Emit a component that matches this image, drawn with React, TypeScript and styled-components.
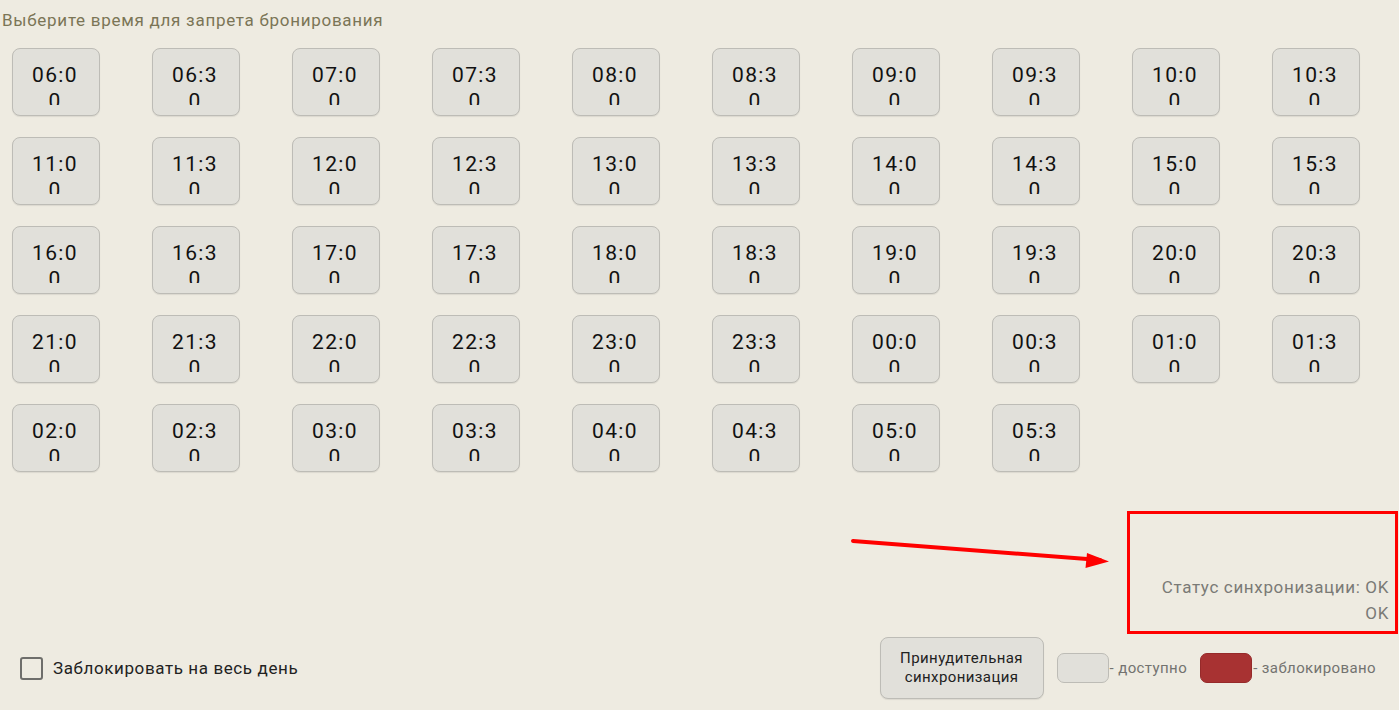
import styled, { createGlobalStyle } from "styled-components";

const GlobalStyle = createGlobalStyle`
  html, body {
    margin: 0;
    padding: 0;
    background: #eeebe1;
    font-family: Roboto, "Noto Sans", sans-serif;
  }
`;

// 06:00 ... 05:30, every half hour
const times: string[] = Array.from({ length: 48 }, (_, i) => {
  const h = (6 + Math.floor(i / 2)) % 24;
  return `${String(h).padStart(2, "0")}:${i % 2 ? "30" : "00"}`;
});

const App = () => {
  return (
    <>
      <GlobalStyle />
      <Page>
        <Title>Выберите время для запрета бронирования</Title>
        <TimeGrid>
          {times.map((t) => (
            <TimeButton key={t}>
              <TimeLabel>{t}</TimeLabel>
            </TimeButton>
          ))}
        </TimeGrid>
        <Spacer />
        <StatusBox>
          <StatusLine>Статус синхронизации: OK</StatusLine>
          <StatusLine>OK</StatusLine>
        </StatusBox>
        <Footer>
          <CheckRow>
            <CheckBox />
            <CheckText>Заблокировать на весь день</CheckText>
          </CheckRow>
          <RightGroup>
            <SyncButton>
              Принудительная
              <br />
              синхронизация
            </SyncButton>
            <Legend>
              <Swatch $blocked={false} />
              <LegendText>- доступно</LegendText>
            </Legend>
            <Legend>
              <Swatch $blocked />
              <LegendText>- заблокировано</LegendText>
            </Legend>
          </RightGroup>
        </Footer>
        <Arrow width="270" height="40" viewBox="0 0 270 40">
          <line x1="3" y1="6" x2="250" y2="25" stroke="#ff0000" strokeWidth="4" strokeLinecap="round" />
          <polygon points="259,26.5 237,18 235.5,33" fill="#ff0000" />
        </Arrow>
      </Page>
    </>
  );
};

const Page = styled.div`
  position: relative;
  width: 1399px;
  height: 710px;
  display: flex;
  flex-direction: column;
  box-sizing: border-box;
  overflow: hidden;
`;

const Title = styled.div`
  margin: 11px 0 0 2px;
  font-size: 17px;
  line-height: 19px;
  letter-spacing: 0.72px;
  color: #7b7556;
`;

const TimeGrid = styled.div`
  display: grid;
  grid-template-columns: repeat(10, 88px);
  column-gap: 52px;
  row-gap: 21px;
  margin: 18px 0 0 12px;
`;

const TimeButton = styled.div`
  box-sizing: border-box;
  width: 88px;
  height: 68px;
  padding: 13px 20px 0 18px;
  border: 1px solid #bdbcb6;
  border-radius: 8px;
  background: #e1e0da;
  box-shadow: 0 1px 1px rgba(0, 0, 0, 0.08);
`;

const TimeLabel = styled.div`
  height: 43px;
  overflow: hidden;
  font-size: 21px;
  line-height: 26px;
  letter-spacing: 1.4px;
  color: #111;
  text-align: center;
  word-break: break-all;
`;

const Spacer = styled.div`
  flex: 1;
`;

const StatusBox = styled.div`
  align-self: flex-end;
  box-sizing: border-box;
  width: 271px;
  height: 123px;
  margin-right: 1px;
  padding: 0 6px 5px 0;
  border: 3px solid #ff0000;
  display: flex;
  flex-direction: column;
  justify-content: flex-end;
  align-items: flex-end;
`;

const StatusLine = styled.div`
  font-size: 17px;
  line-height: 26px;
  letter-spacing: 0.65px;
  color: #7a7a76;
`;

const Footer = styled.div`
  height: 76px;
  box-sizing: border-box;
  padding: 3px 23px 11px 20px;
  display: flex;
  align-items: center;
  justify-content: space-between;
`;

const CheckRow = styled.div`
  display: flex;
  align-items: center;
  gap: 10px;
`;

const CheckBox = styled.div`
  box-sizing: border-box;
  width: 23px;
  height: 23px;
  border: 2px solid #6e6e6b;
  border-radius: 3px;
`;

const CheckText = styled.span`
  font-size: 17px;
  letter-spacing: 0.6px;
  color: #222;
`;

const RightGroup = styled.div`
  display: flex;
  align-items: center;
  gap: 13px;
`;

const SyncButton = styled.div`
  box-sizing: border-box;
  width: 164px;
  height: 62px;
  display: flex;
  align-items: center;
  justify-content: center;
  text-align: center;
  font-size: 15px;
  line-height: 19px;
  letter-spacing: 0.4px;
  color: #222;
  background: #e1e0da;
  border: 1px solid #bdbcb6;
  border-radius: 8px;
  box-shadow: 0 1px 1px rgba(0, 0, 0, 0.08);
`;

const Legend = styled.div`
  display: flex;
  align-items: center;
  gap: 1px;
`;

const Swatch = styled.div<{ $blocked: boolean }>`
  box-sizing: border-box;
  width: 52px;
  height: 30px;
  border-radius: 7px;
  background: ${(p) => (p.$blocked ? "#a83232" : "#e1e0da")};
  border: 1px solid ${(p) => (p.$blocked ? "#962a2a" : "#bdbcb6")};
`;

const LegendText = styled.span`
  font-size: 15px;
  letter-spacing: 0.4px;
  color: #737370;
`;

const Arrow = styled.svg`
  position: absolute;
  left: 850px;
  top: 535px;
`;

export default App;
